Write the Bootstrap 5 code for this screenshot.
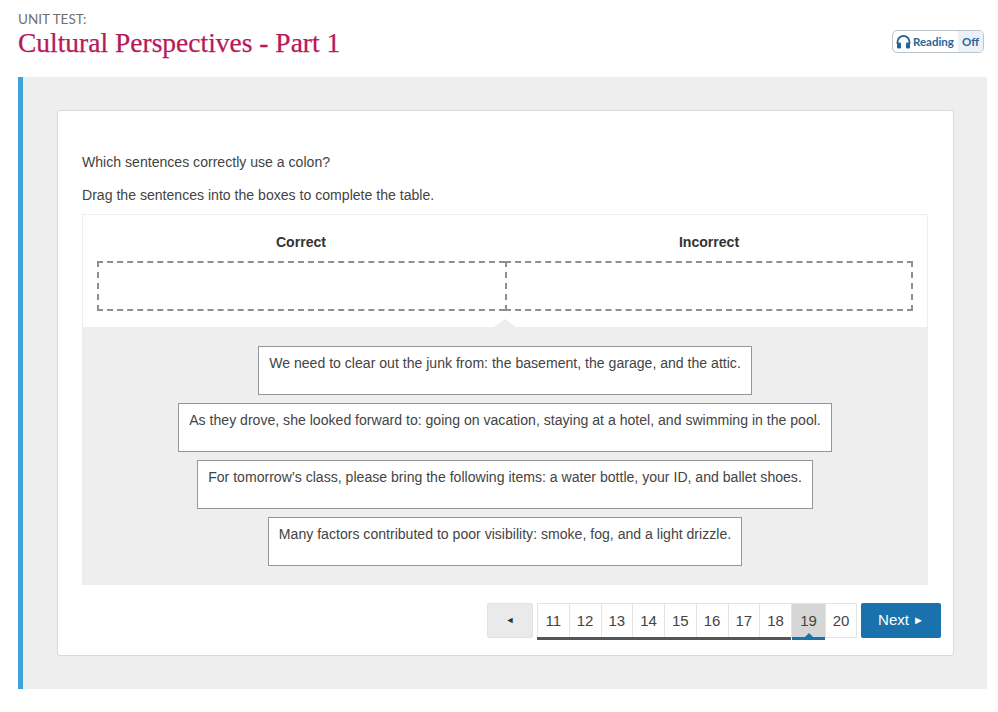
<!DOCTYPE html>
<html lang="en">
<head>
<meta charset="UTF-8">
<title>Unit Test</title>
<link href="https://cdn.jsdelivr.net/npm/bootstrap@5.3.2/dist/css/bootstrap.min.css" rel="stylesheet">
<style>
body { background: #fff; font-family: "Liberation Sans", Arial, sans-serif; color: #444; font-size: 14.08px; }
.page-head { padding: 11px 14px 0 18px; height: 77px; }
.unit-label { font-family: Lato, sans-serif; font-size: 13.5px; line-height: 16px; color: #6f6f6f; }
.unit-title { font-family: "Liberation Serif", serif; font-size: 27.5px; line-height: 32px; color: #b8195a; margin: 0; font-weight: 400; -webkit-text-stroke: .25px #b8195a; }
.read-toggle { height: 23px; margin-top: 19px; border: 1px solid #b9c4cc; border-radius: 5px; font-family: Lato, sans-serif; font-size: 11.5px; font-weight: 700; color: #2a6497; overflow: hidden; }
.read-name { padding: 0 4px 0 3px; gap: 2px; }
.read-state { padding: 0 4px; background: #eaf2f8; }
.test-panel { margin: 0 11px 0 18px; height: 612px; background: #eee; border-left: 5px solid #3ea3d8; padding: 33px 33px 0 34px; }
.test-card { height: 546px; background: #fff; border: 1px solid #d9d9d9; border-radius: 3px; padding: 41px 12px 0 24px; }
.q-text { margin: 0 0 13px; line-height: 20px; color: #444; }
.drag-box { width: 846px; height: 371px; margin-top: -4px; border: 1px solid #eee; border-bottom: 0; }
.drop-part { height: 112px; padding: 0 14px; }
.drop-head { font-weight: 700; line-height: 20px; padding-top: 17px; height: 46px; text-align: center; color: #333; }
.drop-col { width: 50%; }
.drop-slot { height: 50px; border: 2px dashed #8f8f8f; }
.drop-slot.first-slot { border-right: 0; }
.tile-part { position: relative; height: 258px; background: #eee; padding-top: 19px; gap: 8px; }
.tile-part::before { content: ""; position: absolute; left: 411px; top: -8px; border-left: 11px solid transparent; border-right: 11px solid transparent; border-bottom: 8px solid #eee; }
.drag-tile { height: 49px; padding: 6px 10px 0; background: #fff; border: 1px solid #969696; line-height: 20px; color: #444; white-space: nowrap; }
.pager-row { margin-top: 18px; height: 35px; }
.prev-btn { width: 46px; height: 35px; margin-right: 4px; background: #eaeaea; border: 1px solid #e2e2e2; border-radius: 2px; font-size: 9px; color: #333; }
.num-strip { height: 35px; border: 1px solid #e4e4e4; border-left: 0; }
.num-cell { position: relative; width: 31.75px; height: 34px; font-size: 15px; line-height: 34px; text-align: center; color: #444; border-left: 1px solid #e4e4e4; }
.num-cell:last-child { width: 31px; }
.num-cell.seen::after { content: ""; position: absolute; left: -1px; right: 0; bottom: -2px; height: 3px; background: #555; }
.num-cell.now { width: 34px; background: #d6d6d6; }
.num-cell.now::after { content: ""; position: absolute; left: 0; right: 0; bottom: -2px; height: 3px; background: #1a72ad; }
.num-cell.now::before { content: ""; position: absolute; left: 13px; bottom: 1px; border-left: 4px solid transparent; border-right: 4px solid transparent; border-bottom: 4px solid #1a72ad; }
.next-btn { width: 80px; height: 35px; margin-left: 4px; background: #1a72ad; color: #fff; border: 0; border-radius: 2px; font-size: 15px; padding: 0; }
.next-btn span { font-size: 11px; vertical-align: 1px; }
</style>
</head>
<body>
<div class="page-head d-flex justify-content-between align-items-start">
  <div>
    <div class="unit-label">UNIT TEST:</div>
    <h1 class="unit-title">Cultural Perspectives - Part 1</h1>
  </div>
  <div class="read-toggle d-flex align-items-stretch">
    <span class="read-name d-flex align-items-center">
      <svg width="15" height="14" viewBox="0 0 15 14"><path d="M1.5 9V7a6 6 0 0 1 12 0v2" fill="none" stroke="#2a6497" stroke-width="1.8"/><rect x="1" y="7.5" width="4" height="6" rx="1.2" fill="#2a6497"/><rect x="10" y="7.5" width="4" height="6" rx="1.2" fill="#2a6497"/></svg>
      Reading
    </span>
    <span class="read-state d-flex align-items-center">Off</span>
  </div>
</div>

<div class="test-panel">
  <div class="test-card">
    <p class="q-text">Which sentences correctly use a colon?</p>
    <p class="q-text">Drag the sentences into the boxes to complete the table.</p>
    <div class="drag-box">
      <div class="drop-part d-flex">
        <div class="drop-col">
          <div class="drop-head">Correct</div>
          <div class="drop-slot first-slot"></div>
        </div>
        <div class="drop-col">
          <div class="drop-head">Incorrect</div>
          <div class="drop-slot"></div>
        </div>
      </div>
      <div class="tile-part d-flex flex-column align-items-center">
        <div class="drag-tile">We need to clear out the junk from: the basement, the garage, and the attic.</div>
        <div class="drag-tile">As they drove, she looked forward to: going on vacation, staying at a hotel, and swimming in the pool.</div>
        <div class="drag-tile">For tomorrow’s class, please bring the following items: a water bottle, your ID, and ballet shoes.</div>
        <div class="drag-tile">Many factors contributed to poor visibility: smoke, fog, and a light drizzle.</div>
      </div>
    </div>
    <div class="pager-row d-flex justify-content-end">
      <button class="prev-btn" type="button">◄</button>
      <div class="num-strip d-flex">
        <div class="num-cell seen">11</div>
        <div class="num-cell seen">12</div>
        <div class="num-cell seen">13</div>
        <div class="num-cell seen">14</div>
        <div class="num-cell seen">15</div>
        <div class="num-cell seen">16</div>
        <div class="num-cell seen">17</div>
        <div class="num-cell seen">18</div>
        <div class="num-cell now">19</div>
        <div class="num-cell">20</div>
      </div>
      <button class="next-btn" type="button">Next <span>►</span></button>
    </div>
  </div>
</div>
<script src="https://cdn.jsdelivr.net/npm/bootstrap@5.3.2/dist/js/bootstrap.bundle.min.js"></script>
</body>
</html>
